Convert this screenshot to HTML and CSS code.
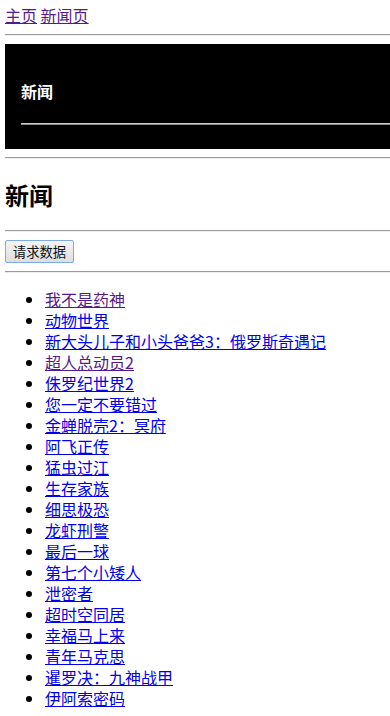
FILE: index.html
```html
<!DOCTYPE html>
<html lang="zh-CN">
<head>
    <meta charset="UTF-8">
    <meta name="viewport" content="width=device-width, initial-scale=1.0">
    <title>新闻页</title>
    <link rel="stylesheet" href="styles.css">
</head>
<body>
    <nav class="nav">
        <a href="#" class="visited">主页</a>
        <a href="#" class="visited">新闻页</a>
    </nav>
    <hr>
    <div class="banner">
        <h4>新闻</h4>
        <hr>
    </div>
    <hr>
    <h2>新闻</h2>
    <hr>
    <button class="fetch">请求数据</button>
    <hr>
    <ul class="news">
        <li><a href="#" class="visited">我不是药神</a></li>
        <li><a href="#">动物世界</a></li>
        <li><a href="#">新大头儿子和小头爸爸3：俄罗斯奇遇记</a></li>
        <li><a href="#" class="visited">超人总动员2</a></li>
        <li><a href="#">侏罗纪世界2</a></li>
        <li><a href="#">您一定不要错过</a></li>
        <li><a href="#">金蝉脱壳2：冥府</a></li>
        <li><a href="#">阿飞正传</a></li>
        <li><a href="#">猛虫过江</a></li>
        <li><a href="#">生存家族</a></li>
        <li><a href="#">细思极恐</a></li>
        <li><a href="#">龙虾刑警</a></li>
        <li><a href="#">最后一球</a></li>
        <li><a href="#">第七个小矮人</a></li>
        <li><a href="#">泄密者</a></li>
        <li><a href="#">超时空同居</a></li>
        <li><a href="#">幸福马上来</a></li>
        <li><a href="#">青年马克思</a></li>
        <li><a href="#">暹罗决：九神战甲</a></li>
        <li><a href="#">伊阿索密码</a></li>
    </ul>
</body>
</html>
```

FILE: styles.css
```css
body {
    margin: 5px 0 0 5px;
    font-family: "Noto Sans CJK SC", "Noto Sans", sans-serif;
    font-size: 16px;
    line-height: 21px;
    color: #000;
    background: #fff;
}
a { color: #0000ee; }
a.visited { color: #551a8b; }

hr {
    margin: 8px 0;
    border: none;
    border-top: 1px solid #9a9a9a;
    border-bottom: 1px solid #eeeeee;
    height: 0;
}

.banner {
    background: #000;
    color: #fff;
    padding: 16px 0 16px 16px;
}
.banner h4 {
    margin: 21px 0;
    font-size: 16px;
    font-weight: bold;
}
.banner hr {
    margin: 21px 0 8px;
    border-top: 1px solid #c8c8c8;
    border-bottom: 1px solid #8c8c8c;
}

h2 {
    margin: 20px 0;
    font-size: 24px;
    line-height: 31px;
    font-weight: bold;
}

.fetch {
    display: block;
    width: 69px;
    height: 23px;
    padding: 0;
    font-family: "Noto Sans CJK SC", sans-serif;
    font-size: 13.33px;
    line-height: 20px;
    color: #111;
    background: linear-gradient(#f4f4f4, #dedede);
    border: 1px solid #7eaae6;
    border-radius: 2px;
}

.news {
    margin: 16px 0;
    padding-left: 40px;
}
```
